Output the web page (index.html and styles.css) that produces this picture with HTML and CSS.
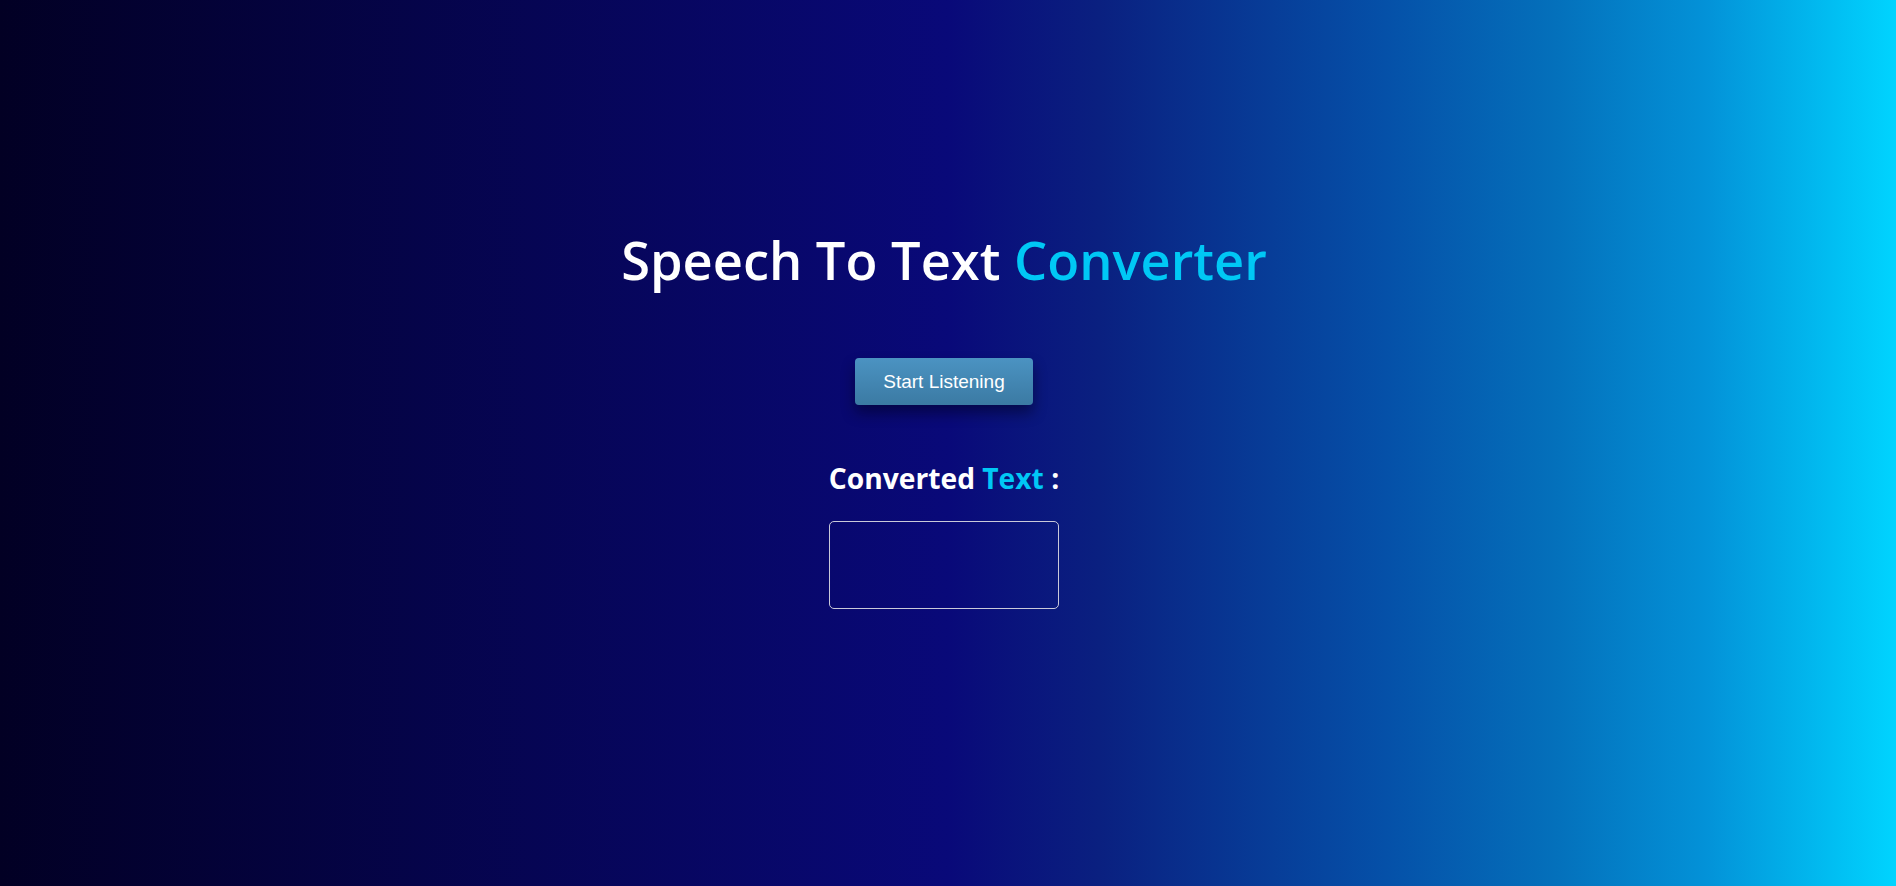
FILE: index.html
```html
<!DOCTYPE html>
<html lang="en">
<head>
<meta charset="utf-8">
<title>Speech To Text Converter</title>
<link rel="stylesheet" href="styles.css">
</head>
<body>
<main class="container">
  <h1 class="title">Speech To Text <span class="accent">Converter</span></h1>
  <button class="btn" type="button">Start Listening</button>
  <h2 class="subtitle">Converted <span class="accent">Text</span> :</h2>
  <div class="output"></div>
</main>
</body>
</html>
```
FILE: styles.css
```css
* { box-sizing: border-box; }
html, body { height: 100%; }
body {
  margin: 0;
  background: linear-gradient(90deg,
    #020024 0%,
    #090979 50%,
    #0a2080 58%,
    #0550a8 73%,
    #0470bb 82%,
    #0392d8 90%,
    #00d4ff 100%);
  font-family: "Open Sans", "Noto Sans", sans-serif;
  color: #fff;
}
.container {
  display: flex;
  flex-direction: column;
  align-items: center;
  padding-top: 222px;
  padding-right: 8px;
}
.title {
  margin: 0;
  font-size: 52.4px;
  font-weight: 600;
  line-height: 76px;
  letter-spacing: 0;
}
.accent { color: #00c8f5; }
.btn {
  margin-top: 60px;
  width: 178px;
  height: 47px;
  border: none;
  border-radius: 4px;
  background: linear-gradient(180deg, #4b93c2 0%, #3b7aa3 100%);
  color: #fff;
  font-family: "Liberation Sans", Arial, sans-serif;
  font-size: 19px;
  box-shadow: 0 8px 14px rgba(0, 0, 20, 0.45);
}
.subtitle {
  margin: 54px 0 0;
  font-size: 28.2px;
  font-weight: 700;
  line-height: 38px;
}
.output {
  margin-top: 24px;
  width: 230px;
  height: 88px;
  border: 1px solid #c9c9d9;
  border-radius: 5px;
}
```
